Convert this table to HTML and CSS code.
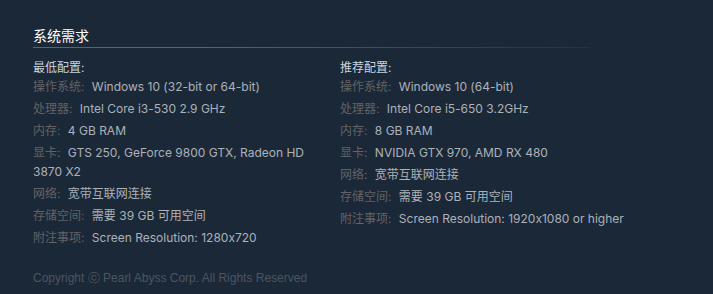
FILE: index.html
```html
<!DOCTYPE html>
<html lang="zh">
<head>
<meta charset="utf-8">
<link rel="stylesheet" href="styles.css">
</head>
<body>
<div class="sysreq">
  <h2 class="sysreq-title">系统需求</h2>
  <div class="cols">
    <div class="col">
      <div class="col-head">最低配置:</div>
      <ul class="reqs">
        <li><span class="lbl">操作系统:</span> Windows 10 (32-bit or 64-bit)</li>
        <li><span class="lbl">处理器:</span> Intel Core i3-530 2.9 GHz</li>
        <li><span class="lbl">内存:</span> 4 GB RAM</li>
        <li><span class="lbl">显卡:</span> GTS 250, GeForce 9800 GTX, Radeon HD 3870 X2</li>
        <li><span class="lbl">网络:</span> 宽带互联网连接</li>
        <li><span class="lbl">存储空间:</span> 需要 39 GB 可用空间</li>
        <li><span class="lbl">附注事项:</span> Screen Resolution: 1280x720</li>
      </ul>
    </div>
    <div class="col">
      <div class="col-head">推荐配置:</div>
      <ul class="reqs">
        <li><span class="lbl">操作系统:</span> Windows 10 (64-bit)</li>
        <li><span class="lbl">处理器:</span> Intel Core i5-650 3.2GHz</li>
        <li><span class="lbl">内存:</span> 8 GB RAM</li>
        <li><span class="lbl">显卡:</span> NVIDIA GTX 970, AMD RX 480</li>
        <li><span class="lbl">网络:</span> 宽带互联网连接</li>
        <li><span class="lbl">存储空间:</span> 需要 39 GB 可用空间</li>
        <li><span class="lbl">附注事项:</span> Screen Resolution: 1920x1080 or higher</li>
      </ul>
    </div>
  </div>
  <p class="copyright">Copyright ⓒ Pearl Abyss Corp. All Rights Reserved</p>
</div>
</body>
</html>
```
FILE: styles.css
```css
html, body {
  margin: 0;
  padding: 0;
  background: #1b2838;
}
body {
  font-family: "Inter", "Noto Sans CJK SC", sans-serif;
  font-size: 12px;
  font-feature-settings: "calt" 0;
  color: #acb2b8;
}
.sysreq {
  padding: 26px 0 0 33px;
  width: 640px;
}
.sysreq-title {
  margin: 0;
  width: 557px;
  font-family: "Noto Sans CJK SC", sans-serif;
  font-size: 14px;
  font-weight: normal;
  color: #ffffff;
  line-height: 18px;
  padding-bottom: 3px;
}
.sysreq-title::after {
  content: "";
  display: block;
  height: 1px;
  margin-top: 3px;
  background: linear-gradient(to right, #3b6e8c 0%, #3b6e8c 30%, rgba(59,110,140,0.15) 100%);
}
.cols {
  display: flex;
  gap: 13px;
  margin-top: 7px;
}
.col {
  width: 294px;
  flex: none;
}
.col-head {
  color: #c6d4df;
  line-height: 19px;
}
.reqs {
  list-style: none;
  margin: 0;
  padding: 0;
}
.reqs li {
  line-height: 19px;
  margin-bottom: 3px;
}
.lbl {
  color: #626366;
  margin-right: 4px;
}
.copyright {
  margin: 19px 0 0;
  font-family: "Liberation Sans", Arial, sans-serif;
  color: #4b5560;
  line-height: 19px;
}
```
